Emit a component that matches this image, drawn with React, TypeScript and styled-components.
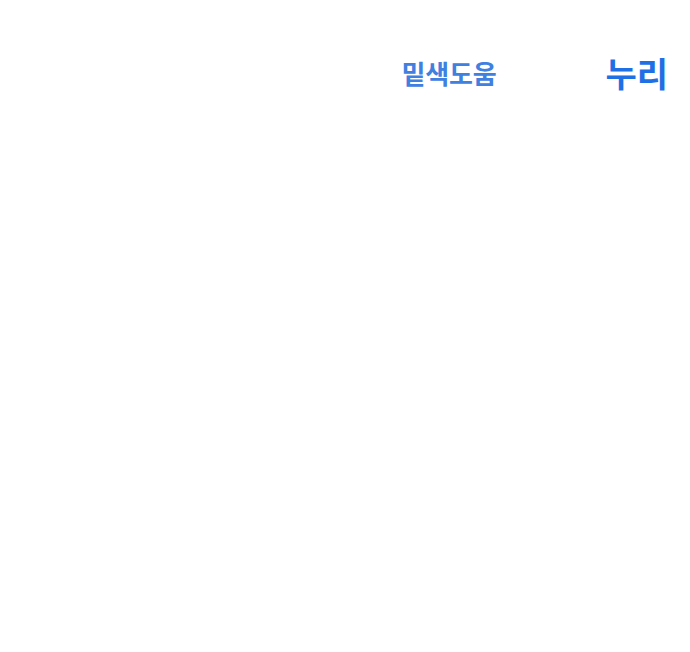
import React from "react";
import styled, { createGlobalStyle } from "styled-components";

const GlobalStyle = createGlobalStyle`
	html, body {
		margin: 0;
		padding: 0;
		background: #ffffff;
		font-family: "Noto Sans CJK KR", "Noto Sans", sans-serif;
	}
`;

const Page = styled.div`
	width: 690px;
	height: 652px;
	background: #ffffff;
	overflow: hidden;
`;

const Header = styled.header`
	display: flex;
	justify-content: flex-end;
	align-items: center;
	gap: 109px;
	padding: 51px 22px 0 0;
`;

const Tab = styled.span<{ $active?: boolean }>`
	font-size: ${(p) => (p.$active ? "34px" : "26px")};
	font-weight: ${(p) => (p.$active ? 700 : 600)};
	color: ${(p) => (p.$active ? "#1f6fe5" : "#3f80e0")};
	letter-spacing: ${(p) => (p.$active ? "0" : "-0.2px")};
	line-height: 1.3;
`;

const App = () => {
	return (
		<Page>
			<GlobalStyle />
			<Header>
				<Tab>밑색도움</Tab>
				<Tab $active>누리</Tab>
			</Header>
		</Page>
	);
};

export default App;
